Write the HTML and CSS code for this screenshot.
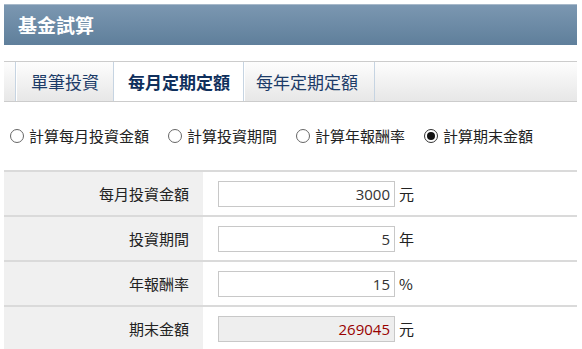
FILE: index.html
```html
<!DOCTYPE html>
<html>
<head>
    <meta charset="UTF-8">
    <title>基金試算</title>
    <link rel="stylesheet" href="styles.css">
</head>
<body>
    <div class="page">
        <div class="title-bar">基金試算</div>

        <div class="tabs">
            <div class="tab-spacer"></div>
            <div class="tab">單筆投資</div>
            <div class="tab active">每月定期定額</div>
            <div class="tab last">每年定期定額</div>
            <div class="tab-rest"></div>
        </div>

        <div class="modes">
            <label class="mode"><input type="radio" name="mode"> 計算每月投資金額</label>
            <label class="mode"><input type="radio" name="mode"> 計算投資期間</label>
            <label class="mode"><input type="radio" name="mode"> 計算年報酬率</label>
            <label class="mode"><input type="radio" name="mode" checked> 計算期末金額</label>
        </div>

        <div class="calc">
            <div class="row">
                <div class="label">每月投資金額</div>
                <div class="field"><input type="text" value="3000"><span class="unit">元</span></div>
            </div>
            <div class="row">
                <div class="label">投資期間</div>
                <div class="field"><input type="text" value="5"><span class="unit">年</span></div>
            </div>
            <div class="row">
                <div class="label">年報酬率</div>
                <div class="field"><input type="text" value="15"><span class="unit">%</span></div>
            </div>
            <div class="row">
                <div class="label">期末金額</div>
                <div class="field"><input type="text" class="result" value="269045" readonly><span class="unit">元</span></div>
            </div>
        </div>
    </div>
</body>
</html>
```

FILE: styles.css
```css
body {
    font-family: "Noto Sans", "Noto Sans CJK TC", sans-serif;
    margin: 0;
    padding: 0;
    background-color: #ffffff;
    color: #222222;
}
.page {
    padding: 4px 5px 0 4px;
}
.title-bar {
    height: 40px;
    line-height: 40px;
    padding-left: 14px;
    border-top: 1px solid #a7b9ca;
    background: linear-gradient(#7b97b1, #5f7f9b);
    color: #ffffff;
    font-family: "Noto Sans CJK TC", sans-serif;
    font-size: 19px;
    font-weight: bold;
}
.tabs {
    display: flex;
    margin-top: 16px;
    height: 39px;
    border-top: 1px solid #cccccc;
    border-bottom: 1px solid #cccccc;
    background: linear-gradient(#fdfdfd, #e7e7e7);
}
.tab-spacer {
    width: 11px;
    border-right: 1px solid #c6d4e2;
}
.tab {
    padding: 0 14px;
    line-height: 39px;
    font-family: "Noto Sans CJK TC", sans-serif;
    font-size: 17px;
    color: #1c3b68;
    border-right: 1px solid #c6d4e2;
    border-left: 1px solid #ffffff;
}
.tab.active {
    background-color: #ffffff;
    font-weight: bold;
    color: #0f2f5c;
    padding: 0 13px;
}
.tab.last {
    padding: 0 16px 0 11px;
}
.tab-rest {
    flex: 1;
}
.modes {
    display: flex;
    gap: 19px;
    padding: 22px 0 0 6px;
    height: 46px;
    box-sizing: border-box;
    margin-bottom: 22px;
}
.mode {
    display: flex;
    align-items: center;
    gap: 5px;
    font-family: "Noto Sans CJK TC", sans-serif;
    font-size: 15px;
    line-height: 20px;
    color: #222222;
}
.mode input {
    appearance: none;
    -webkit-appearance: none;
    margin: 0;
    width: 14px;
    height: 14px;
    border: 1px solid #666666;
    border-radius: 50%;
    background-color: #ffffff;
    box-sizing: border-box;
    display: flex;
    align-items: center;
    justify-content: center;
}
.mode input:checked {
    border-color: #333333;
}
.mode input:checked::after {
    content: "";
    width: 8px;
    height: 8px;
    border-radius: 50%;
    background-color: #111111;
}
.row {
    display: flex;
    height: 43px;
    border-top: 2px solid #dadada;
}
.label {
    width: 185px;
    padding-right: 14px;
    background-color: #f0f0f0;
    text-align: right;
    line-height: 43px;
    font-family: "Noto Sans CJK TC", sans-serif;
    font-size: 15px;
    color: #222222;
}
.field {
    display: flex;
    align-items: center;
    padding-left: 15px;
}
.field input {
    width: 177px;
    height: 26px;
    box-sizing: border-box;
    border: 1px solid #c8c8c8;
    padding: 0 4px;
    text-align: right;
    font-family: "Open Sans", "Noto Sans CJK TC", sans-serif;
    font-size: 15px;
    color: #333333;
    background-color: #ffffff;
}
.field input.result {
    background-color: #eeeeee;
    color: #990000;
}
.unit {
    margin-left: 4px;
    font-family: "Noto Sans CJK TC", sans-serif;
    font-size: 15px;
    color: #222222;
}
```
